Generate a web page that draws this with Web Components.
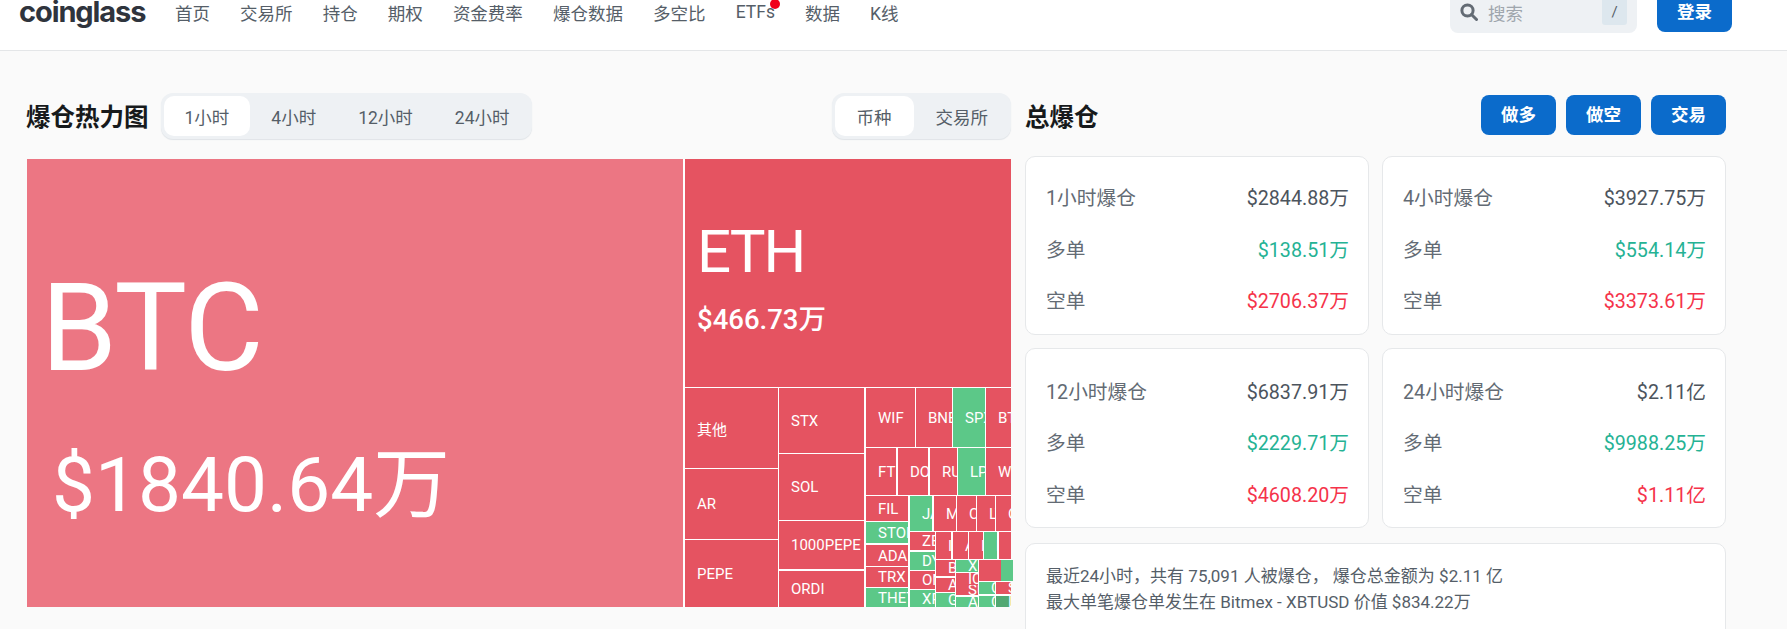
<!DOCTYPE html>
<html lang="zh">
<head>
<meta charset="utf-8">
<title>爆仓热力图</title>
<style>
  html, body { margin: 0; height: 629px; overflow: hidden; background: #fafafa; }
  body { font-family: Roboto, "Noto Sans CJK SC", sans-serif; }
</style>
</head>
<body>
<site-header></site-header>
<page-main>
  <heat-panel slot="left"></heat-panel>
  <total-panel slot="right"></total-panel>
</page-main>

<script>
// cabecera con logo, navegacion, buscador y login
class SiteHeader extends HTMLElement {
  constructor() {
    super();
    this.attachShadow({ mode: 'open' });
    const items = ['首页', '交易所', '持仓', '期权', '资金费率', '爆仓数据', '多空比', 'ETFs', '数据', 'K线'];
    this.shadowRoot.innerHTML = `
      <style>
        :host { display: block; height: 50px; background: #fff; border-bottom: 1px solid #e4e6e8; overflow: hidden; }
        .row { display: flex; align-items: center; height: 40px; margin-top: -8px; padding-left: 19px; font-size: 17.5px; color: #555e68; }
        .logo { width: 156px; font: 700 29px/40px Inter, sans-serif; letter-spacing: -1.1px; color: #2f343d; }
        nav { display: flex; align-items: center; gap: 30.1px; flex: 1; }
        nav span { position: relative; white-space: nowrap; }
        .dot { position: absolute; right: -5px; top: -3px; width: 10px; height: 10px; border-radius: 50%; background: #f0001c; }
        .search { display: flex; align-items: center; width: 187px; height: 41px; box-sizing: border-box; padding: 0 10px; background: #eef1f4; border-radius: 8px; color: #9fa6ad; }
        .search svg { width: 18px; height: 18px; margin-right: 10px; flex: none; }
        .search b { flex: 1; font-weight: 400; }
        kbd { align-self: flex-start; width: 25px; height: 33px; background: #dde7ee; border-radius: 3px; font: 400 15px/40px Roboto, sans-serif; color: #555e68; text-align: center; }
        .login { width: 75px; height: 40px; margin: 0 55px 0 20px; background: #0b6bcb; border-radius: 8px; color: #fff; font-weight: 700; text-align: center; line-height: 40px; }
      </style>
      <div class="row">
        <div class="logo">coinglass</div>
        <nav>${items.map(t => `<span>${t}${t === 'ETFs' ? '<i class="dot"></i>' : ''}</span>`).join('')}</nav>
        <div class="search">
          <svg viewBox="0 0 18 18" fill="none" stroke="#636b74" stroke-width="3"><circle cx="7.5" cy="7.5" r="5.6"/><path d="M11.5 11.5 16.5 16.5" stroke-linecap="round"/></svg>
          <b>搜索</b><kbd>/</kbd>
        </div>
        <div class="login">登录</div>
      </div>`;
  }
}

class PageMain extends HTMLElement {
  constructor() {
    super();
    this.attachShadow({ mode: 'open' });
    this.shadowRoot.innerHTML = `
      <style>
        :host { display: flex; gap: 14px; padding: 42px 0 0 27px; }
        .l { display: block; width: 984px; flex: none; }
        .r { display: block; width: 701px; flex: none; }
      </style>
      <div class="l"><slot name="left"></slot></div>
      <div class="r"><slot name="right"></slot></div>`;
  }
}

// selector de pestañas, el primero activo
class TabGroup extends HTMLElement {
  constructor() {
    super();
    this.attachShadow({ mode: 'open' });
  }
  connectedCallback() {
    const items = this.getAttribute('items').split(',');
    const pad = this.getAttribute('pad') || 21;
    this.shadowRoot.innerHTML = `
      <style>
        :host { display: inline-flex; height: 46px; box-sizing: border-box; padding: 3px 1px 3px 3px; background: #eef1f4; border-radius: 12px; box-shadow: 0 1px 1px #dfe3e7; font-size: 17.5px; color: #555e68; }
        span { display: flex; align-items: center; padding: 0 ${pad}px; border-radius: 10px; white-space: nowrap; }
        span.on { background: #fff; }
      </style>
      ${items.map((t, i) => `<span class="${i === 0 ? 'on' : ''}">${t}</span>`).join('')}`;
  }
}

const R = '#e55361', G = '#5cc888';
// nombre, x1, y1, x2, y2, color (coordenadas relativas al mapa)
const TILES = [
  ['其他', 658, 229, 751, 309, R], ['AR', 658, 310, 751, 380, R], ['PEPE', 658, 381, 751, 448, R],
  ['STX', 752, 229, 837, 294, R], ['SOL', 752, 295, 837, 361, R], ['1000PEPE', 752, 362, 837, 410, R], ['ORDI', 752, 412, 837, 448, R],
  ['WIF', 839, 229, 888, 288, R], ['BNB', 889, 229, 925, 288, R], ['SPX', 926, 229, 958, 288, G], ['BTT', 959, 229, 984, 288, R],
  ['FTM', 839, 289, 869, 336, R], ['DOGE', 871, 289, 901, 336, R], ['RUNE', 903, 289, 930, 336, R], ['LPT', 931, 289, 958, 336, G], ['WLD', 959, 289, 984, 336, R],
  ['FIL', 839, 337, 881, 362, R], ['STORJ', 839, 363, 881, 384, G], ['ADA', 839, 386, 881, 407, R], ['TRX', 839, 408, 881, 428, R], ['THETA', 839, 429, 881, 448, G],
  ['JASMY', 883, 337, 905, 372, G], ['MKR', 907, 337, 929, 372, R], ['CRV', 930, 337, 949, 372, R], ['LTC', 950, 337, 968, 372, R], ['OP', 969, 337, 984, 372, R],
  ['ZEC', 883, 373, 908, 391, R], ['DYDX', 883, 393, 908, 411, G], ['ONDO', 883, 412, 908, 430, R], ['XRP', 883, 431, 908, 448, G],
  ['INJ', 909, 373, 924, 400, R], ['AVAX', 926, 373, 941, 400, R], ['IMX', 942, 373, 956, 400, R], ['EOS', 957, 373, 970, 400, G], ['BCH', 972, 373, 984, 400, R],
  ['BLUR', 909, 401, 928, 417, R], ['APT', 909, 419, 928, 433, R], ['GALA', 909, 434, 928, 448, G],
  ['XLM', 929, 401, 951, 413, G], ['ICP', 929, 414, 951, 426, R], ['SUI', 929, 426, 951, 436, R], ['ATOM', 929, 438, 951, 448, G],
  ['ARB', 952, 401, 962, 422, R], ['ENS', 963, 401, 973, 422, R], ['NEAR', 974, 401, 984, 422, G],
  ['CFX', 952, 423, 968, 435, G], ['SEI', 969, 423, 984, 435, R], ['CAKE', 952, 437, 968, 448, G], ['LDO', 969, 437, 984, 448, '#52a873']
];

class MapTile extends HTMLElement {
  constructor() {
    super();
    this.attachShadow({ mode: 'open' });
    this.shadowRoot.innerHTML = `
      <style>
        :host { position: absolute; display: flex; align-items: center; overflow: hidden; box-sizing: border-box; padding-left: 12px; color: #fff; font-size: 15px; font-weight: 400; white-space: nowrap; }
      </style>
      <slot></slot>`;
  }
}

// bloques grandes con nombre y valor
class BigTile extends HTMLElement {
  constructor() {
    super();
    this.attachShadow({ mode: 'open' });
  }
  connectedCallback() {
    const big = this.getAttribute('size') === 'xl';
    this.shadowRoot.innerHTML = `
      <style>
        :host { display: flex; flex-direction: column; justify-content: center; box-sizing: border-box; height: 100%; color: #fff; white-space: nowrap; background: ${this.getAttribute('bg')}; padding-left: ${big ? 19 : 12}px; padding-top: ${big ? 28 : 15}px; }
        .n { font-size: ${big ? 122 : 60}px; letter-spacing: ${big ? -1.2 : -2}px; line-height: ${big ? 140 : 66}px; margin-left: ${big ? -5 : 0}px; }
        .v { font-size: ${big ? 76.5 : 27.5}px; font-weight: ${big ? 400 : 500}; line-height: ${big ? 100 : 44}px; margin-top: ${big ? 36 : 13}px; padding-left: ${big ? 6 : 0}px; }
      </style>
      <div class="n">${this.getAttribute('name')}</div>
      <div class="v">${this.getAttribute('value')}</div>`;
  }
}

class HeatMap extends HTMLElement {
  constructor() {
    super();
    this.attachShadow({ mode: 'open' });
    const tiles = TILES.map(t => `<map-tile style="left:${t[1]}px;top:${t[2]}px;width:${t[3] - t[1]}px;height:${t[4] - t[2]}px;background:${t[5]}">${t[0]}</map-tile>`).join('');
    this.shadowRoot.innerHTML = `
      <style>
        :host { display: block; position: relative; width: 984px; height: 448px; background: #fff; }
        .btc { position: absolute; left: 0; top: 0; width: 656px; height: 448px; }
        .eth { position: absolute; left: 658px; top: 0; width: 326px; height: 228px; }
      </style>
      <div class="btc"><big-tile size="xl" bg="#ec7683" name="BTC" value="$1840.64万"></big-tile></div>
      <div class="eth"><big-tile bg="#e55361" name="ETH" value="$466.73万"></big-tile></div>
      ${tiles}`;
  }
}

class HeatPanel extends HTMLElement {
  constructor() {
    super();
    this.attachShadow({ mode: 'open' });
    this.shadowRoot.innerHTML = `
      <style>
        :host { display: block; }
        .top { display: flex; align-items: center; height: 46px; margin-bottom: 20px; }
        h2 { margin: 0 12px 2px -1px; font-size: 24.5px; font-weight: 700; color: #171a1c; white-space: nowrap; }
        .grow { flex: 1; }
      </style>
      <div class="top">
        <h2>爆仓热力图</h2>
        <tab-group items="1小时,4小时,12小时,24小时"></tab-group>
        <div class="grow"></div>
        <tab-group pad="22" items="币种,交易所"></tab-group>
      </div>
      <heat-map></heat-map>`;
  }
}

class LiqCard extends HTMLElement {
  constructor() {
    super();
    this.attachShadow({ mode: 'open' });
  }
  connectedCallback() {
    const a = n => this.getAttribute(n);
    this.shadowRoot.innerHTML = `
      <style>
        :host { display: block; box-sizing: border-box; padding: ${a('top') || 14}px 19px 0 20px; background: #fff; border: 1px solid #e6e8ea; border-radius: 10px; font-size: 19.7px; color: #636b74; }
        div { display: flex; justify-content: space-between; align-items: center; height: 51.5px; white-space: nowrap; }
        .t { color: #4c545d; } .g { color: #25b294; } .s { color: #f5334a; }
      </style>
      <div><span>${a('label')}</span><span class="t">${a('total')}</span></div>
      <div><span>多单</span><span class="g">${a('long')}</span></div>
      <div><span>空单</span><span class="s">${a('short')}</span></div>`;
  }
}

class TotalPanel extends HTMLElement {
  constructor() {
    super();
    this.attachShadow({ mode: 'open' });
    this.shadowRoot.innerHTML = `
      <style>
        :host { display: block; }
        .top { display: flex; align-items: center; height: 46px; margin-bottom: 17px; }
        h2 { margin: 0 0 2px; flex: 1; font-size: 24.5px; font-weight: 700; color: #171a1c; }
        .btn { width: 75px; height: 40px; margin: 0 0 2px 10px; background: #0b6bcb; border-radius: 8px; color: #fff; font-size: 17.5px; font-weight: 700; line-height: 40px; text-align: center; }
        .grid { display: grid; grid-template-columns: 344px 344px; grid-template-rows: 179px 180px; gap: 13px 13px; }
        .note { box-sizing: border-box; height: 120px; margin-top: 15px; padding: 20px 20px; background: #fff; border: 1px solid #e6e8ea; border-radius: 10px; font-size: 17px; line-height: 25.6px; color: #555e68; }
      </style>
      <div class="top">
        <h2>总爆仓</h2>
        <div class="btn">做多</div><div class="btn">做空</div><div class="btn">交易</div>
      </div>
      <div class="grid">
        <liq-card label="1小时爆仓" total="$2844.88万" long="$138.51万" short="$2706.37万"></liq-card>
        <liq-card label="4小时爆仓" total="$3927.75万" long="$554.14万" short="$3373.61万"></liq-card>
        <liq-card top="15.5" label="12小时爆仓" total="$6837.91万" long="$2229.71万" short="$4608.20万"></liq-card>
        <liq-card top="15.5" label="24小时爆仓" total="$2.11亿" long="$9988.25万" short="$1.11亿"></liq-card>
      </div>
      <div class="note">最近24小时，共有 75,091 人被爆仓， 爆仓总金额为 $2.11 亿<br>最大单笔爆仓单发生在 Bitmex - XBTUSD 价值 $834.22万</div>`;
  }
}

// Registrar los componentes
customElements.define('site-header', SiteHeader);
customElements.define('page-main', PageMain);
customElements.define('tab-group', TabGroup);
customElements.define('map-tile', MapTile);
customElements.define('big-tile', BigTile);
customElements.define('heat-map', HeatMap);
customElements.define('heat-panel', HeatPanel);
customElements.define('liq-card', LiqCard);
customElements.define('total-panel', TotalPanel);
</script>
</body>
</html>
